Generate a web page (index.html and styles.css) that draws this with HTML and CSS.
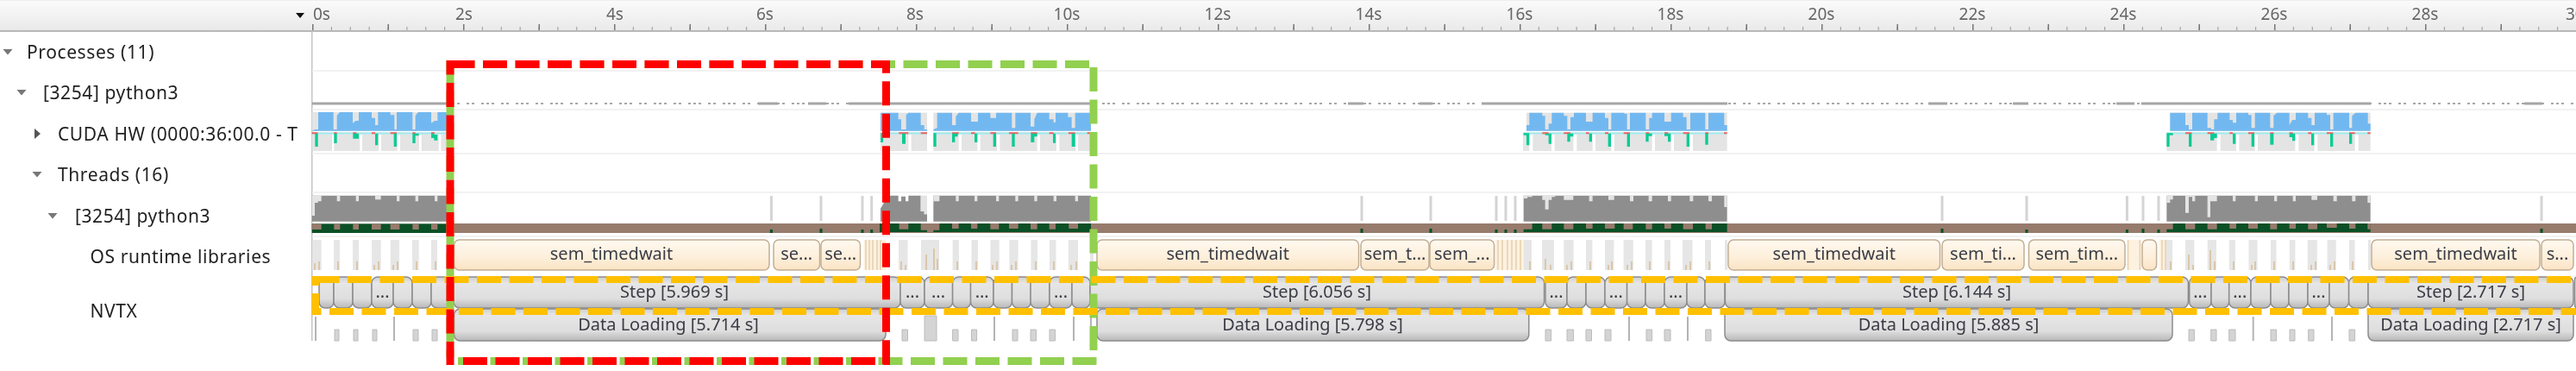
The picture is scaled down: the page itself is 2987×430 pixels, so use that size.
FILE: index.html
```html
<!DOCTYPE html>
<html lang="en">
<head>
<meta charset="utf-8">
<title>Timeline</title>
<link rel="stylesheet" href="styles.css">
</head>
<body>
<div class="app">
  <header class="top">
    <div class="corner"><span class="caret"></span></div>
    <svg class="ruler" viewBox="361 0 2626 37" width="2626" height="37">
      <line class="ruler-top" x1="361" y1="0.5" x2="2987" y2="0.5"/>
      <line class="ruler-base" x1="361" y1="36" x2="2987" y2="36"/>
      <line class="tick-minor" x1="362" y1="33" x2="2987" y2="33"/>
      <line class="tick-major" x1="362" y1="31.5" x2="2987" y2="31.5"/>
      <text class="time first" x="363" y="23">0s</text>
      <text class="time" x="538" y="23">2s</text>
      <text class="time" x="713" y="23">4s</text>
      <text class="time" x="887" y="23">6s</text>
      <text class="time" x="1061" y="23">8s</text>
      <text class="time" x="1237" y="23">10s</text>
      <text class="time" x="1412" y="23">12s</text>
      <text class="time" x="1587" y="23">14s</text>
      <text class="time" x="1762" y="23">16s</text>
      <text class="time" x="1937" y="23">18s</text>
      <text class="time" x="2112" y="23">20s</text>
      <text class="time" x="2287" y="23">22s</text>
      <text class="time" x="2462" y="23">24s</text>
      <text class="time" x="2637" y="23">26s</text>
      <text class="time" x="2812" y="23">28s</text>
      <text class="time first" x="2975" y="23">30s</text>
    </svg>
  </header>
  <main class="body">
    <nav class="tree">
      <div class="node d0"><span class="tri down"></span><span class="label">Processes (11)</span></div>
      <div class="node d1"><span class="tri down"></span><span class="label">[3254] python3</span></div>
      <div class="node d2"><span class="tri right"></span><span class="label">CUDA HW (0000:36:00.0 - T</span></div>
      <div class="node d2"><span class="tri down"></span><span class="label">Threads (16)</span></div>
      <div class="node d3"><span class="tri down"></span><span class="label">[3254] python3</span></div>
      <div class="node d4"><span class="label">OS runtime libraries</span></div>
      <div class="node d4"><span class="label">NVTX</span></div>
    </nav>
    <svg class="chart" viewBox="361 37 2626 393" width="2626" height="393">
      <defs>
        <linearGradient id="gradSem" x1="0" y1="0" x2="0" y2="1">
          <stop offset="0" stop-color="#fff9f0"/>
          <stop offset=".55" stop-color="#fdf0dc"/>
          <stop offset="1" stop-color="#fbe3c4"/>
        </linearGradient>
        <linearGradient id="gradStep" x1="0" y1="0" x2="0" y2="1">
          <stop offset="0" stop-color="#cfcfcf"/>
          <stop offset=".2" stop-color="#e6e6e6"/>
          <stop offset=".7" stop-color="#dedede"/>
          <stop offset="1" stop-color="#b8b8b8"/>
        </linearGradient>
      </defs>
      <line class="vline" x1="361.5" y1="37" x2="361.5" y2="395"/>
      <line class="sep" x1="362" y1="82" x2="2987" y2="82"/>
      <line class="sep" x1="362" y1="127" x2="2987" y2="127"/>
      <line class="sep" x1="362" y1="178" x2="2987" y2="178"/>
      <line class="sep" x1="362" y1="223" x2="2987" y2="223"/>
      <line class="sep" x1="362" y1="274" x2="2987" y2="274"/>

      <line class="dots" x1="518" y1="120" x2="2987" y2="120"/>
      <path class="solid" d="M362 120H518M879 120H902M937 120H958M984 120H1265M1563 120H1581M1646 120H1661M1718 120H2003M2236 120H2258M2334 120H2352M2454 120H2475M2483 120H2749M2927 120H2948"/>

      <!-- burst A -->
      <g transform="translate(350 120) scale(.33333)">
        <rect class="cgray" x="35" y="30" width="490" height="65"/>
        <polygon class="blue" points="35,95 45,90 57,90 57,30 110,30 110,90 122,90 122,42 132,30 177,30 177,68 188,60 198,60 198,30 243,30 243,50 255,50 255,75 265,75 265,30 308,30 308,40 322,40 322,90 330,90 330,30 385,30 385,90 395,90 395,42 405,30 450,30 450,68 462,60 472,60 472,30 525,30 525,95"/>
        <path class="cgray" d="M35 107h70v58h-70zM112 107h90v58h-90zM210 107h58v58h-58zM276 107h56v58h-56zM342 107h66v58h-66zM416 107h60v58h-60zM484 107h40v58h-40z"/>
        <rect class="cyan" x="35" y="100" width="490" height="7"/>
        <path class="red" d="M35 100h20v6h-20zM112 100h10v6h-10zM178 100h12v6h-12zM243 100h12v6h-12zM308 100h22v6h-22zM385 100h10v6h-10zM450 100h12v6h-12z"/>
        <path class="mint" d="M46 104h10v46h-10zM112 104h10v34h-10zM178 104h20v18h-20zM255 104h10v41h-10zM320 104h10v46h-10zM385 104h10v34h-10zM395 104h12v8h-12zM450 104h10v16h-10zM460 108h12v20h-12z"/>
        <polygon class="cpu" points="35,410 35,320 525,320 525,410"/>
        <path class="cgray" d="M35 320h10v70h-10zM45 320h11v25h-11zM56 320h12v20h-12zM122 320h11v20h-11zM188 320h10v20h-10zM255 320h20v14h-20zM330 320h10v20h-10zM395 320h10v20h-10zM462 320h10v20h-10z"/>
        <rect class="dkgreen" x="35" y="418" width="490" height="32"/>
        <path class="brown" d="M35 418h33v20h-33zM112 418h21v20h-21zM178 418h20v20h-20zM243 418h32v20h-32zM308 418h32v20h-32zM385 418h22v20h-22zM450 418h22v20h-22z"/>
      </g>
      <rect class="brown" x="525" y="259" width="2462" height="11"/>

      <!-- burst B + C -->
      <g transform="translate(1020 115) scale(.33333)">
        <rect class="cgray" x="3" y="47" width="162" height="63"/>
        <rect class="cgray" x="187" y="47" width="548" height="63"/>
        <polygon class="blue" points="3,110 3,47 65,47 65,70 75,70 75,105 92,105 92,55 100,47 143,47 143,90 155,90 155,105 165,105 165,110"/>
        <polygon class="blue" points="187,110 187,105 200,100 200,47 252,47 252,90 265,90 265,60 275,47 318,47 318,78 342,78 342,47 385,47 385,65 405,65 405,47 460,47 460,100 472,100 472,47 525,47 525,95 538,95 538,70 548,47 590,47 590,70 605,70 605,80 612,80 612,47 655,47 655,62 668,62 668,100 680,100 680,47 735,47 735,110"/>
        <path class="cgray" d="M3 122h97v58h-97zM110 122h55v58h-55zM187 122h88v58h-88zM285 122h55v58h-55zM350 122h58v58h-58zM418 122h130v58h-130zM558 122h57v58h-57zM625 122h57v58h-57zM690 122h45v58h-45z"/>
        <path class="cyan" d="M3 115h162v7h-162zM187 115h548v7h-548z"/>
        <path class="red" d="M67 115h33v6h-33zM143 115h22v6h-22zM252 115h23v6h-23zM318 115h14v6h-14zM385 115h20v6h-20zM450 115h32v6h-32zM526 115h22v6h-22zM590 115h15v6h-15zM657 115h23v6h-23zM722 115h13v6h-13z"/>
        <path class="mint" d="M3 118h9v32h-9zM78 119h12v36h-12zM187 118h10v47h-10zM252 119h10v31h-10zM262 119h10v11h-10zM330 119h10v31h-10zM395 119h10v46h-10zM460 119h10v46h-10zM526 119h12v31h-12zM538 119h10v11h-10zM603 119h9v33h-9zM668 119h12v46h-12z"/>
        <polygon class="cpu" points="3,425 3,380 15,360 35,335 65,335 65,355 75,355 75,338 90,338 90,355 100,355 100,335 143,335 143,390 155,390 155,400 165,400 165,425"/>
        <path class="cgray" d="M143 335h22v55h-22zM155 390h10v10h-10z"/>
        <path class="cpu" d="M187 335h548v90h-548z"/>
        <path class="cgray" d="M187 335h21v20h-21zM265 335h10v20h-10zM330 335h10v20h-10zM405 335h10v20h-10zM472 335h10v20h-10zM538 335h10v20h-10zM605 335h10v20h-10zM680 335h10v20h-10z"/>
        <path class="dkgreen" d="M0 432h735v30h-735z"/>
        <path class="brown" d="M68 432h32v20h-32zM143 432h65v23h-65zM165 432h22v33h-22zM252 432h23v18h-23zM318 432h22v18h-22zM385 432h30v20h-30zM450 432h32v18h-32zM525 432h23v20h-23zM590 432h22v20h-22zM658 432h32v18h-32z"/>
      </g>

      <!-- burst D -->
      <g transform="translate(1765 115) scale(.33333)">
        <rect class="cgray" x="15" y="47" width="698" height="63"/>
        <polygon class="blue" points="15,110 15,90 25,90 25,47 70,47 70,58 80,58 80,105 92,105 92,85 103,85 103,47 145,47 145,58 157,58 157,105 168,105 168,62 180,62 180,47 222,47 222,78 245,78 245,47 288,47 288,65 300,65 300,105 310,105 310,47 355,47 355,50 365,50 365,105 375,105 375,47 430,47 430,105 442,105 442,65 452,65 452,47 495,47 495,78 518,78 518,47 560,47 560,62 572,62 572,105 585,105 585,47 637,47 637,105 648,105 648,47 703,47 703,90 713,90 713,110"/>
        <path class="cgray" d="M3 122h22v58h-22zM37 122h65v58h-65zM113 122h65v58h-65zM190 122h55v58h-55zM255 122h55v58h-55zM320 122h132v58h-132zM462 122h56v58h-56zM528 122h55v58h-55zM594 122h119v58h-119z"/>
        <rect class="cyan" x="3" y="115" width="710" height="7"/>
        <path class="red" d="M70 115h22v6h-22zM145 115h23v6h-23zM222 115h11v6h-11zM288 115h12v6h-12zM353 115h22v6h-22zM430 115h12v6h-12zM495 115h13v6h-13zM560 115h22v6h-22zM637 115h11v6h-11zM702 115h11v6h-11z"/>
        <path class="mint" d="M15 118h10v42h-10zM5 118h10v7h-10zM92 119h10v36h-10zM80 119h12v6h-12zM157 119h10v29h-10zM167 119h11v11h-11zM233 119h10v29h-10zM299 119h10v46h-10zM365 119h10v46h-10zM430 119h10v29h-10zM440 119h12v9h-12zM507 119h10v29h-10zM495 119h12v9h-12zM572 119h10v46h-10zM637 119h10v39h-10z"/>
        <path class="cpu" d="M5 335h708v90h-708z"/>
        <path class="cgray" d="M5 335h13v10h-13zM18 335h17v5h-17zM70 335h33v15h-33zM80 350h12v33h-12zM103 335h12v5h-12zM145 335h33v15h-33zM233 335h12v20h-12zM300 335h20v15h-20zM375 335h12v20h-12zM440 335h12v20h-12zM507 335h11v20h-11zM583 335h12v20h-12zM648 335h12v20h-12zM703 335h10v40h-10z"/>
        <path class="dkgreen" d="M5 432h708v30h-708z"/>
        <path class="brown" d="M0 432h35v20h-35zM70 432h33v20h-33zM145 432h33v20h-33zM222 432h23v18h-23zM288 432h34v18h-34zM353 432h32v20h-32zM430 432h22v20h-22zM495 432h23v18h-23zM560 432h34v20h-34zM638 432h22v20h-22z"/>
      </g>

      <!-- burst E -->
      <g transform="translate(2508 115) scale(.33333)">
        <rect class="cgray" x="25" y="47" width="697" height="63"/>
        <polygon class="blue" points="25,110 25,47 78,47 78,90 90,90 90,105 102,105 102,47 155,47 155,100 168,100 168,105 178,105 178,70 190,70 190,47 232,47 232,72 243,72 243,82 255,82 255,47 297,47 297,55 308,55 308,100 320,100 320,47 373,47 373,100 385,100 385,57 397,47 440,47 440,90 450,72 462,72 462,47 505,47 505,65 517,65 517,90 528,90 528,47 570,47 570,55 582,55 582,105 593,105 593,47 648,47 648,100 658,100 658,58 670,47 713,47 713,85 722,85 722,110"/>
        <path class="cgray" d="M13 122h175v58h-175zM200 122h55v58h-55zM265 122h55v58h-55zM330 122h130v58h-130zM472 122h55v58h-55zM538 122h130v58h-130zM680 122h42v58h-42z"/>
        <rect class="cyan" x="13" y="115" width="709" height="7"/>
        <path class="red" d="M78 115h22v6h-22zM155 115h23v6h-23zM232 115h11v6h-11zM297 115h21v6h-21zM373 115h12v6h-12zM440 115h12v6h-12zM505 115h12v6h-12zM570 115h22v6h-22zM648 115h20v6h-20zM712 115h10v6h-10z"/>
        <path class="mint" d="M13 118h10v47h-10zM23 118h12v7h-12zM90 119h10v46h-10zM165 119h23v11h-23zM165 119h13v24h-13zM178 119h10v16h-10zM243 119h10v36h-10zM308 119h10v46h-10zM373 119h12v39h-12zM440 119h20v13h-20zM450 119h10v26h-10zM516 119h10v41h-10zM582 119h10v46h-10zM648 119h10v36h-10z"/>
        <path class="cpu" d="M13 335h709v90h-709z"/>
        <path class="cgray" d="M13 335h12v25h-12zM25 335h10v14h-10zM78 335h12v60h-12zM90 335h12v5h-12zM102 335h10v20h-10zM155 335h10v75h-10zM165 335h23v20h-23zM243 335h10v20h-10zM320 335h10v20h-10zM387 335h10v20h-10zM452 335h10v20h-10zM517 335h20v15h-20zM593 335h12v20h-12zM658 335h12v20h-12zM712 335h10v25h-10z"/>
        <path class="dkgreen" d="M13 432h709v30h-709z"/>
        <path class="brown" d="M0 432h35v20h-35zM78 432h34v20h-34zM155 432h33v20h-33zM232 432h23v18h-23zM297 432h33v18h-33zM373 432h24v20h-24zM440 432h22v18h-22zM505 432h32v20h-32zM570 432h35v15h-35zM648 432h22v18h-22zM712 432h10v20h-10z"/>
      </g>

      <!-- isolated thread samples -->
      <path class="sample" d="M894.4 227V256M952 227V256M1000 227V256M1010.7 227V256M1579 227V256M1659 227V256M1735 227V256M1746 227V256M1757 227V256M2252 227V256M2350 227V256M2466.4 227V256M2485 227V256M2503 227V256M2947 227V256"/>
      <path class="sample-dot" d="M894.4 266V270M952 265V270M1000 266V270M1010.7 266V270M1579 265V270M1659 265V270M1735 266V270M1746 266V270M1757 266V270M2252 265V270M2350 266V270M2466.4 266V270M2485 265V270M2503 266V270M2947 265V270"/>

      <!-- OS runtime libraries -->
      <path class="osbar" d="M362 278h10.7v35h-10.7zM387 278h7v35h-7zM409 278h7v35h-7zM431 278h10.7v35h-10.7zM452.7 278h10.3v35h-10.3zM478 278h7.7v35h-7.7zM500 278h7v35h-7zM1042 278h10.5v35h-10.5zM1068 278h21v35h-21zM1104.6 278h7.4v35h-7.4zM1126.5 278h7.5v35h-7.5zM1148.5 278h10.2v35h-10.2zM1170.4 278h10.2v35h-10.2zM1195.4 278h7.6v35h-7.6zM1217 278h7.5v35h-7.5zM1238.8 278h11.2v35h-11.2zM1264 278h4v35h-4zM1767 278h9v35h-9zM1788 278h14v35h-14zM1813.4 278h11.2v35h-11.2zM1839 278h7.4v35h-7.4zM1861 278h10.4v35h-10.4zM1882.6 278h11.2v35h-11.2zM1908 278h7.6v35h-7.6zM1930 278h7v35h-7zM1951 278h11.5v35h-11.5zM1977 278h7v35h-7zM2000 278h3v35h-3zM2511.6 278h7.4v35h-7.4zM2534 278h10.4v35h-10.4zM2559.7 278h10.3v35h-10.3zM2584.7 278h7.3v35h-7.3zM2607.5 278h10.1v35h-10.1zM2633 278h6.5v35h-6.5zM2654.8 278h6.6v35h-6.6zM2675.8 278h11v35h-11zM2698.6 278h10.1v35h-10.1zM2724 278h6.6v35h-6.6zM2746 278h3v35h-3z"/>
      <path class="ostick" d="M365 305v8M370 303v10M392 303v10M414 303v10M434 307v6M439 303v10M456 307v6M461 303v10M483 303v10M505 303v10M1045 303v10M1050 307v6M1074 295v18M1083 288v25M1087 300v13M1110 303v10M1132 303v10M1151 307v6M1156 303v10M1173 307v6M1178 303v10M1201 303v10M1222 303v10M1242 307v6M1248 303v10M1774 303v10M1792 300v13M1798 307v6M1817 307v6M1822 303v10M1844 303v10M1865 307v6M1869 303v10M1887 307v6M1892 303v10M1913 303v10M1935 303v10M1955 307v6M1960 303v10M1982 303v10M2517 303v10M2538 295v18M2543 307v6M2563 290v23M2568 303v10M2590 303v10M2611 307v6M2615 303v10M2637 303v10M2659 303v10M2680 307v6M2685 303v10M2702 307v6M2707 303v10M2728 303v10"/>
      <rect class="tan" x="1001.5" y="278" width="25.5" height="35"/>
      <rect class="tan" x="1734" y="278" width="33" height="35"/>
      <rect class="tan" x="2467" y="278" width="15" height="35"/>
      <rect class="tan" x="2504" y="278" width="8" height="35"/>
      <path class="stripes" d="M1004 278v35M1008 278v35M1012 278v35M1017 278v35M1021 278v35M1737 278v35M1742 278v35M1748 278v35M1753 278v35M1758 278v35M1763 278v35M2467.5 278v35M2481.5 278v35M2507 278v35M2511 278v35"/>

      <rect class="sem" x="526.5" y="278" width="365.5" height="35" rx="6"/><text class="slice" x="709" y="301">sem_timedwait</text>
      <rect class="sem" x="897" y="278" width="53.5" height="35" rx="6"/><text class="slice" x="923.7" y="301">se...</text>
      <rect class="sem" x="952" y="278" width="45.5" height="35" rx="6"/><text class="slice" x="974.7" y="301">se...</text>
      <rect class="sem" x="1272" y="278" width="303.5" height="35" rx="6"/><text class="slice" x="1423.7" y="301">sem_timedwait</text>
      <rect class="sem" x="1578" y="278" width="79" height="35" rx="6"/><text class="slice" x="1617.5" y="301">sem_t...</text>
      <rect class="sem" x="1658" y="278" width="74.6" height="35" rx="6"/><text class="slice" x="1695.3" y="301">sem_...</text>
      <rect class="sem" x="2004" y="278" width="245.5" height="35" rx="6"/><text class="slice" x="2126.7" y="301">sem_timedwait</text>
      <rect class="sem" x="2252" y="278" width="95" height="35" rx="6"/><text class="slice" x="2299.5" y="301">sem_ti...</text>
      <rect class="sem" x="2352.5" y="278" width="111.5" height="35" rx="6"/><text class="slice" x="2408.2" y="301">sem_tim...</text>
      <rect class="sem" x="2484" y="278" width="16.6" height="35" rx="6"/>
      <rect class="sem" x="2750" y="278" width="195" height="35" rx="6"/><text class="slice" x="2847.5" y="301">sem_timedwait</text>
      <rect class="sem" x="2947" y="278" width="37" height="35" rx="6"/><text class="slice" x="2965.5" y="301">s...</text>

      <!-- NVTX Step -->
      <rect class="pill" x="370" y="321" width="17" height="36" rx="7"/>
      <rect class="pill" x="387" y="321" width="22" height="36" rx="7"/>
      <rect class="pill" x="409" y="321" width="22" height="36" rx="7"/>
      <rect class="pill" x="431" y="321" width="25" height="36" rx="7"/><text class="slice" x="443.5" y="345">...</text>
      <rect class="pill" x="456" y="321" width="22" height="36" rx="7"/>
      <rect class="pill" x="478" y="321" width="22" height="36" rx="7"/>
      <rect class="pill" x="500" y="321" width="26" height="36" rx="7"/>
      <rect class="pill" x="526" y="321" width="518" height="36" rx="7"/><text class="slice" x="782" y="345">Step [5.969 s]</text>
      <rect class="pill" x="1044" y="321" width="28" height="36" rx="7"/><text class="slice" x="1058" y="345">...</text>
      <rect class="pill" x="1072" y="321" width="32.6" height="36" rx="7"/><text class="slice" x="1088" y="345">...</text>
      <rect class="pill" x="1104.6" y="321" width="21" height="36" rx="7"/>
      <rect class="pill" x="1125.5" y="321" width="26.5" height="36" rx="7"/><text class="slice" x="1138.7" y="345">...</text>
      <rect class="pill" x="1152" y="321" width="21.5" height="36" rx="7"/>
      <rect class="pill" x="1173.5" y="321" width="21.9" height="36" rx="7"/>
      <rect class="pill" x="1195" y="321" width="22" height="36" rx="7"/>
      <rect class="pill" x="1217" y="321" width="26" height="36" rx="7"/><text class="slice" x="1230" y="345">...</text>
      <rect class="pill" x="1243" y="321" width="21" height="36" rx="7"/>
      <rect class="pill" x="1264" y="321" width="526.6" height="36" rx="7"/><text class="slice" x="1527" y="345">Step [6.056 s]</text>
      <rect class="pill" x="1792" y="321" width="25" height="36" rx="7"/><text class="slice" x="1804.5" y="345">...</text>
      <rect class="pill" x="1817" y="321" width="22" height="36" rx="7"/>
      <rect class="pill" x="1839" y="321" width="22" height="36" rx="7"/>
      <rect class="pill" x="1861" y="321" width="25.6" height="36" rx="7"/><text class="slice" x="1873.8" y="345">...</text>
      <rect class="pill" x="1886.6" y="321" width="21.4" height="36" rx="7"/>
      <rect class="pill" x="1908" y="321" width="22" height="36" rx="7"/>
      <rect class="pill" x="1930" y="321" width="26" height="36" rx="7"/><text class="slice" x="1943" y="345">...</text>
      <rect class="pill" x="1956" y="321" width="21" height="36" rx="7"/>
      <rect class="pill" x="1977" y="321" width="23" height="36" rx="7"/>
      <rect class="pill" x="2000.4" y="321" width="537" height="36" rx="7"/><text class="slice" x="2269" y="345">Step [6.144 s]</text>
      <rect class="pill" x="2538.7" y="321" width="25.3" height="36" rx="7"/><text class="slice" x="2551.3" y="345">...</text>
      <rect class="pill" x="2564" y="321" width="20.7" height="36" rx="7"/>
      <rect class="pill" x="2584.7" y="321" width="25.3" height="36" rx="7"/><text class="slice" x="2597.3" y="345">...</text>
      <rect class="pill" x="2610" y="321" width="23" height="36" rx="7"/>
      <rect class="pill" x="2633" y="321" width="21" height="36" rx="7"/>
      <rect class="pill" x="2654" y="321" width="22" height="36" rx="7"/>
      <rect class="pill" x="2676" y="321" width="25" height="36" rx="7"/><text class="slice" x="2688.5" y="345">...</text>
      <rect class="pill" x="2701" y="321" width="22.6" height="36" rx="7"/>
      <rect class="pill" x="2723.6" y="321" width="22.4" height="36" rx="7"/>
      <rect class="pill" x="2746" y="321" width="238" height="36" rx="7"/><text class="slice" x="2865" y="345">Step [2.717 s]</text>
      <rect class="pill" x="2985.5" y="321" width="6" height="36" rx="3"/>

      <!-- NVTX Data Loading -->
      <rect class="pill" x="526.5" y="358" width="500.5" height="37" rx="7"/><text class="slice" x="775" y="383">Data Loading [5.714 s]</text>
      <rect class="pill" x="1272" y="358" width="500.8" height="37" rx="7"/><text class="slice" x="1522" y="383">Data Loading [5.798 s]</text>
      <rect class="pill" x="2000" y="358" width="519" height="37" rx="7"/><text class="slice" x="2259.5" y="383">Data Loading [5.885 s]</text>
      <rect class="pill" x="2746" y="358" width="238" height="37" rx="7"/><text class="slice" x="2865" y="383">Data Loading [2.717 s]</text>
      <path class="mini" d="M388 382h5v13h-5zM410 382h5v13h-5zM432 382h5v13h-5zM479 382h6v13h-6zM501 382h6v13h-6zM1046 382h6.5v13h-6.5zM1072 366h14v29h-14zM1104.6 382h6.4v13h-6.4zM1126.5 382h6.1v13h-6.1zM1174 382h6v13h-6zM1195 382h6.5v13h-6.5zM1217 382h6.5v13h-6.5zM1792 382h6.6v13h-6.6zM1817 382h7.6v13h-7.6zM1839 382h6.5v13h-6.5zM1861 382h7v13h-7zM1909 382h6.6v13h-6.6zM1930 382h7v13h-7zM1977.7 382h6.3v13h-6.3zM2538 382h6.4v13h-6.4zM2563.7 382h6.3v13h-6.3zM2584.7 382h7.3v13h-7.3zM2633 382h6.5v13h-6.5zM2655 382h6v13h-6zM2676.7 382h6.3v13h-6.3zM2724 382h6.6v13h-6.6z"/>
      <path class="mini-line" d="M366 367V395M457 367V395M1153 367V395M1245 367V395M1265 367V395M1889 367V395M1957 367V395M2612.7 367V395M2704 367V395"/>
    </svg>
  </main>
  <svg class="marks" viewBox="0 0 2987 430" width="2987" height="430">
    <line class="box green" x1="522" y1="70" x2="522" y2="414" stroke-dashoffset="2"/>
    <line class="box green" x1="522.5" y1="74.5" x2="1263" y2="74.5"/>
    <line class="box green" x1="1268" y1="78" x2="1268" y2="406"/>
    <line class="box green" x1="531" y1="418.5" x2="1273" y2="418.5"/>
    <line class="box orange" x1="365.5" y1="324" x2="2987" y2="324"/>
    <line class="box orange" x1="361" y1="361" x2="2987" y2="361" stroke-dashoffset="16.5"/>
    <line class="orange-side" x1="365.5" y1="320" x2="365.5" y2="331"/>
    <line class="orange-side" x1="365.5" y1="340" x2="365.5" y2="365"/>
    <line class="box red" x1="522" y1="70" x2="522" y2="423" stroke-dashoffset="11.5"/>
    <line class="box red" x1="522.5" y1="74.5" x2="1032" y2="74.5"/>
    <line class="box red" x1="1027.5" y1="70" x2="1027.5" y2="423" stroke-dashoffset="13.2"/>
    <line class="box red" x1="537" y1="418.5" x2="1032" y2="418.5"/>
  </svg>
</div>
</body>
</html>
```

FILE: styles.css
```css
html, body {
  margin: 0;
  padding: 0;
  background: #fff;
}
.app {
  position: relative;
  width: 2987px;
  height: 430px;
  overflow: hidden;
  font-family: "Noto Sans", "Open Sans", sans-serif;
  color: #222;
}
.top {
  display: flex;
  height: 37px;
  filter: blur(.5px);
}
.corner {
  width: 361px;
  flex: none;
  display: flex;
  justify-content: flex-end;
  align-items: center;
  padding-right: 8px;
  box-sizing: border-box;
  background: linear-gradient(#fbfbfb, #e9e9e9);
  border-top: 1px solid #eee;
  border-bottom: 2px solid #b8b8b8;
}
.caret {
  width: 0;
  height: 0;
  border-left: 5.5px solid transparent;
  border-right: 5.5px solid transparent;
  border-top: 6px solid #111;
}
.ruler {
  display: block;
  flex: none;
  background: linear-gradient(#fbfbfb, #e9e9e9);
}
.ruler-top { stroke: #eee; stroke-width: 1; }
.ruler-base { stroke: #b8b8b8; stroke-width: 2; }
.time {
  font-size: 19px;
  fill: #666;
  text-anchor: middle;
}
.time.first { text-anchor: start; }
.tick-minor {
  stroke: #999;
  stroke-width: 4;
  stroke-dasharray: 1 20.875;
}
.tick-major {
  stroke: #777;
  stroke-width: 7;
  stroke-dasharray: 1.5 86;
}
.body {
  display: flex;
  height: 393px;
  filter: blur(.5px);
}
.tree {
  width: 361px;
  flex: none;
  display: grid;
  grid-template-rows: 46px 48px 48px 46px 50px 44px 82px;
  align-content: start;
  font-size: 21px;
  letter-spacing: .6px;
}
.node {
  display: flex;
  align-items: center;
  white-space: nowrap;
  overflow: hidden;
  box-sizing: border-box;
  height: 100%;
}
.d0 { padding-left: 3px; }
.d1 { padding-left: 19px; }
.d2 { padding-left: 37px; }
.d3 { padding-left: 55px; }
.d4 { padding-left: 104.5px; }
.tri {
  flex: none;
  width: 12px;
  height: 7px;
  margin-right: 16px;
  background: #777;
  clip-path: polygon(0 0, 100% 0, 50% 100%);
}
.d1 .tri { margin-right: 19px; }
.d2 .tri { margin-right: 18px; }
.d3 .tri { margin-right: 20px; }
.d2 .tri.right {
  width: 7px;
  height: 12px;
  margin-left: 3px;
  margin-right: 20px;
  background: #555;
  clip-path: polygon(0 0, 100% 50%, 0 100%);
}
.label { color: #222; }
.chart { display: block; flex: none; }
.vline { stroke: #c4c4c4; stroke-width: 2; }
.sep { stroke: #f2f2f2; stroke-width: 2; }
.dots {
  stroke: #a8a8a8;
  stroke-width: 2;
  stroke-dasharray: 3 3 3 3 3 8 3 3 3 8;
}
.solid { stroke: #a5a5a5; stroke-width: 3; fill: none; }
.cgray { fill: #e4e4e4; }
.blue { fill: #72b8f0; }
.cyan { fill: #a5e6ea; }
.red { fill: #f2605c; }
.mint { fill: #0acb94; }
.cpu { fill: #8e8e8e; }
.dkgreen { fill: #0b5026; }
.brown { fill: #977b6c; }
.sample { stroke: #d4d4d4; stroke-width: 3; fill: none; }
.sample-dot { stroke: #0b5026; stroke-width: 3; fill: none; }
.osbar { fill: #e6e6e6; }
.ostick { stroke: #d6bd96; stroke-width: 1.5; fill: none; }
.tan { fill: #fdf1e0; }
.stripes { stroke: #e4cfad; stroke-width: 1.5; fill: none; }
.sem { fill: url(#gradSem); stroke: #c2ae92; stroke-width: 1.5; }
.pill { fill: url(#gradStep); stroke: #8c8c8c; stroke-width: 1.5; }
.mini { fill: #d4d4d4; stroke: #bcbcbc; stroke-width: 1; }
.mini-line { stroke: #b4b4b4; stroke-width: 2; fill: none; }
.slice {
  font-size: 20px;
  fill: #3c3c46;
  text-anchor: middle;
}
.marks {
  position: absolute;
  left: 0;
  top: 0;
  pointer-events: none;
}
.box {
  stroke-width: 9;
  stroke-dasharray: 28 9.5;
  fill: none;
}
.green { stroke: #92d050; }
.red.box { stroke: #ff0000; }
.orange { stroke: #ffc000; stroke-width: 8; }
.orange-side { stroke: #ffc000; stroke-width: 9; }
```
